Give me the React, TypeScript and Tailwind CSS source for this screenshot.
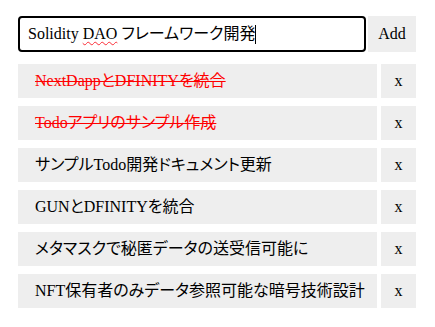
import React from 'react';

type Todo = { text: string; done: boolean };

const todos: Todo[] = [
  { text: 'NextDappとDFINITYを統合', done: true },
  { text: 'Todoアプリのサンプル作成', done: true },
  { text: 'サンプルTodo開発ドキュメント更新', done: false },
  { text: 'GUNとDFINITYを統合', done: false },
  { text: 'メタマスクで秘匿データの送受信可能に', done: false },
  { text: 'NFT保有者のみデータ参照可能な暗号技術設計', done: false },
];

const font = { fontFamily: '"Liberation Serif", "Noto Sans CJK JP", serif' };

export default function App() {
  return (
    <div className="w-[435px] h-[327px] bg-white pl-[18px] pt-4 text-black [font-feature-settings:'palt']" style={font}>
      <div className="flex w-[398px]">
        {/* 入力欄 */}
        <div className="flex-1 h-9 border-2 border-black rounded-[4px] flex items-center pl-2 text-base">
          <span>Solidity </span>
          <span className="underline decoration-wavy decoration-red-500 decoration-1 underline-offset-2 ml-[4px]">DAO</span>
          <span className="ml-[4px]">フレームワーク開発</span>
          <span className="w-px h-[19px] bg-black"></span>
        </div>
        <button className="ml-[2px] w-12 h-9 bg-[#eeeeee] text-base">Add</button>
      </div>

      {/* タスク一覧 */}
      <div className="mt-3 w-[398px] flex flex-col gap-2">
        {todos.map(t => (
          <div key={t.text} className="flex gap-1 h-[34px]">
            <div
              className={
                t.done
                  ? 'flex-1 bg-[#eeeeee] flex items-center pl-[17px] text-base text-[#ff0000] line-through'
                  : 'flex-1 bg-[#eeeeee] flex items-center pl-[17px] text-base'
              }
            >
              {t.text}
            </div>
            <button className="w-[35px] bg-[#eeeeee] text-base">x</button>
          </div>
        ))}
      </div>
    </div>
  );
}
